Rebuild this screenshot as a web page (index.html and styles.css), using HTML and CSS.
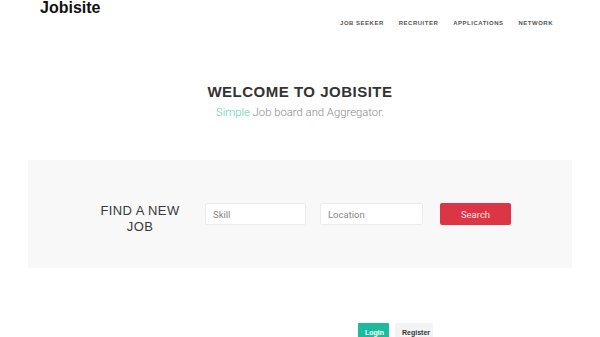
FILE: index.html
```html
<!DOCTYPE html>
<html lang="en">
<head>
<meta charset="UTF-8">
<meta name="viewport" content="width=device-width, initial-scale=1.0">
<title>Jobisite</title>
<link rel="stylesheet" href="styles.css">
</head>
<body>

<header class="topbar">
  <div class="logo">Jobisite</div>
  <ul class="nav">
    <li>Job Seeker</li>
    <li>Recruiter</li>
    <li>Applications</li>
    <li>Network</li>
  </ul>
</header>

<section class="hero">
  <h1>Welcome to Jobisite</h1>
  <p><span class="accent">Simple</span> Job board and Aggregator.</p>
</section>

<section class="finder">
  <h2>Find a new job</h2>
  <input class="field skill" type="text" placeholder="Skill">
  <input class="field location" type="text" placeholder="Location">
  <button class="search-btn">Search</button>
</section>

<div class="auth">
  <button class="btn login">Login</button>
  <button class="btn register">Register</button>
</div>

</body>
</html>
```

FILE: styles.css
```css
body, html {
  margin: 0;
  padding: 0;
  font-family: 'Liberation Sans', Arial, sans-serif;
  background: #fff;
  overflow: hidden;
}

.topbar {
  display: flex;
  justify-content: space-between;
  align-items: flex-start;
  height: 46px;
  padding: 0 47px 0 40px;
}

.logo {
  font-size: 16px;
  font-weight: bold;
  line-height: 16px;
  color: #111;
}

.nav {
  display: flex;
  gap: 15px;
  list-style: none;
  margin: 20px 0 0;
  padding: 0;
  font-size: 6px;
  line-height: 6px;
  font-weight: bold;
  letter-spacing: 0.5px;
  text-transform: uppercase;
  color: #555;
}

.hero {
  text-align: center;
  padding-top: 37px;
}

.hero h1 {
  margin: 0;
  font-size: 15px;
  line-height: 18px;
  letter-spacing: 0.5px;
  text-transform: uppercase;
  color: #333;
}

.hero p {
  margin: 4px 0 0;
  font-family: Roboto, sans-serif;
  font-weight: 300;
  font-size: 11.3px;
  line-height: 16px;
  color: #8a8a8a;
}

.accent {
  color: #5ccfae;
}

.finder {
  display: flex;
  align-items: center;
  box-sizing: border-box;
  width: 544px;
  height: 108px;
  margin: 39px 0 0 28px;
  padding-left: 62px;
  background: #f8f8f8;
}

.finder h2 {
  width: 100px;
  margin: 9px 15px 0 0;
  font-size: 13px;
  line-height: 16px;
  font-weight: normal;
  letter-spacing: 0.4px;
  text-transform: uppercase;
  text-align: center;
  color: #3a3a3a;
}

.field {
  box-sizing: border-box;
  height: 22px;
  padding: 0 7px;
  border: 1px solid #ececec;
  border-radius: 2px;
  background: #fff;
  font-family: Roboto, sans-serif;
  font-size: 9.5px;
  color: #333;
  outline: none;
}

.field::placeholder {
  color: #888;
}

.skill {
  width: 101px;
  margin-right: 14px;
}

.location {
  width: 103px;
  margin-right: 17px;
}

.search-btn {
  width: 71px;
  height: 22px;
  border: none;
  border-radius: 2px;
  background: #dc3545;
  color: #fbe4e6;
  font-family: Roboto, sans-serif;
  font-size: 9.5px;
  padding: 0;
}

.auth {
  display: flex;
  gap: 6px;
  margin-top: 55px;
  padding-left: 358px;
}

.btn {
  height: 18px;
  padding: 0 7px;
  border: none;
  border-radius: 1px;
  font-family: 'Liberation Sans', Arial, sans-serif;
  font-size: 7px;
  font-weight: bold;
}

.login {
  width: 31px;
  background: #1abc9c;
  color: #fff;
}

.register {
  width: 38px;
  background: #f3f3f3;
  color: #333;
}
```
